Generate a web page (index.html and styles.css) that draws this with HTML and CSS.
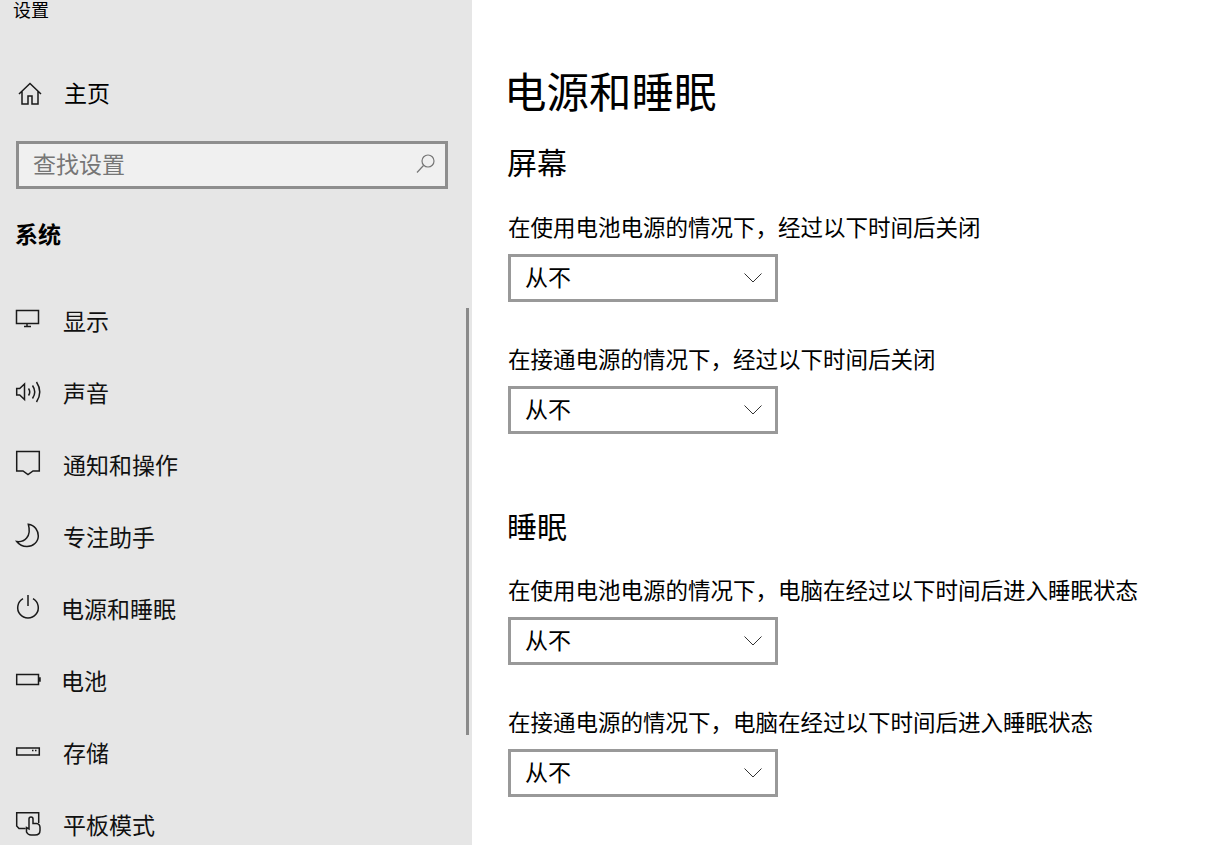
FILE: index.html
```html
<!DOCTYPE html>
<html lang="zh-CN">
<head>
    <meta charset="utf-8">
    <title>设置</title>
    <link rel="stylesheet" href="styles.css">
</head>
<body>
    <div class="sidebar">
        <div class="app-title">设置</div>
        <div class="nav-item home">
            <svg class="icon" viewBox="0 0 24 24"><path d="M1 12 12 1.500 23 12M4 9.500V22h6v-8h4v8h6V9.500"/></svg>
            <span>主页</span>
        </div>
        <div class="search">
            <span class="search-text">查找设置</span>
            <svg class="search-icon" viewBox="0 0 20 20"><circle cx="12" cy="7" r="6"/><path d="M7.500 11.500 1 18.500"/></svg>
        </div>
        <div class="group-title">系统</div>
        <div class="nav-item">
            <svg class="icon" viewBox="0 0 24 24"><path d="M.5 2.500h22v13H.5zM11 15.500v3M8 18.500h7"/></svg>
            <span>显示</span>
        </div>
        <div class="nav-item">
            <svg class="icon" viewBox="0 0 24 24"><path d="M.7 8.500h3l4.800-4.500v15.500l-4.800-4.500h-3zM12.500 8.500q2.500 3.500 0 7M16.500 5.500q4.500 6.500 0 13M20.500 2q6.500 10 0 20"/></svg>
            <span>声音</span>
        </div>
        <div class="nav-item">
            <svg class="icon" viewBox="0 0 24 24"><path d="M.7-.5h22.600v19.500H17l-5 3.500-5-3.500H.7z"/></svg>
            <span>通知和操作</span>
        </div>
        <div class="nav-item">
            <svg class="icon" viewBox="0 0 24 24"><path d="M12.300.3C19 1 22.300 7 22.300 12c0 6-5.300 10.500-11.300 10.500-4 0-8-2-10.300-5 7.300 1 15.300-4.500 11.600-17.200z"/></svg>
            <span>专注助手</span>
        </div>
        <div class="nav-item power">
            <svg class="icon" viewBox="0 0 24 24"><path d="M7 2.700a10.300 10.300 0 1 0 10 0M12-1v11"/></svg>
            <span>电源和睡眠</span>
        </div>
        <div class="nav-item power">
            <svg class="icon" viewBox="0 0 24 24"><path d="M.7 6.500h21.800v10H.7zM22.500 10H24v3h-1.500"/></svg>
            <span>电池</span>
        </div>
        <div class="nav-item">
            <svg class="icon" viewBox="0 0 24 24"><path d="M.7 8h22.600v7H.7zM16 10.500h1.500M19 10.500h1.500"/></svg>
            <span>存储</span>
        </div>
        <div class="nav-item">
            <svg class="icon" viewBox="0 0 24 24"><path d="M9.500 16.500H3L.7 14V.7h22V11M10.500 20v-4.500l2.500 1.500V7q0-2 2-2t2 2v4.500h3.500q3.500.5 3.500 4v3q0 4.500-5 4.500h-4q-3 0-4.500-3z"/></svg>
            <span>平板模式</span>
        </div>
        <div class="scrollbar"></div>
    </div>
    <div class="main">
        <h1>电源和睡眠</h1>
        <h2>屏幕</h2>
        <div class="field">
            <div class="field-label">在使用电池电源的情况下，经过以下时间后关闭</div>
            <div class="select"><span>从不</span><svg class="chevron" viewBox="0 0 18 10"><path d="M.5.500 9 9 17.500.500"/></svg></div>
        </div>
        <div class="field">
            <div class="field-label">在接通电源的情况下，经过以下时间后关闭</div>
            <div class="select"><span>从不</span><svg class="chevron" viewBox="0 0 18 10"><path d="M.5.500 9 9 17.500.500"/></svg></div>
        </div>
        <h2 class="sleep">睡眠</h2>
        <div class="field">
            <div class="field-label">在使用电池电源的情况下，电脑在经过以下时间后进入睡眠状态</div>
            <div class="select"><span>从不</span><svg class="chevron" viewBox="0 0 18 10"><path d="M.5.500 9 9 17.500.500"/></svg></div>
        </div>
        <div class="field">
            <div class="field-label">在接通电源的情况下，电脑在经过以下时间后进入睡眠状态</div>
            <div class="select"><span>从不</span><svg class="chevron" viewBox="0 0 18 10"><path d="M.5.500 9 9 17.500.500"/></svg></div>
        </div>
    </div>
</body>
</html>
```
FILE: styles.css
```css
html, body {
    height: 100%;
}
body {
    margin: 0;
    display: flex;
    overflow: hidden;
    background-color: #fff;
    color: #000;
    font-family: "Noto Sans CJK SC", "Liberation Sans", sans-serif;
}
.sidebar {
    position: relative;
    flex: none;
    width: 472px;
    height: 845px;
    overflow: hidden;
    background-color: #e6e6e6;
}
.app-title {
    height: 22px;
    padding-left: 13px;
    font-size: 18px;
    line-height: 18px;
}
.nav-item {
    display: flex;
    align-items: center;
    height: 72px;
    padding-left: 16px;
    font-size: 23px;
    color: #111;
}
.nav-item span {
    margin-left: 23px;
}
.nav-item.power span {
    margin-left: 21px;
}
.nav-item.home {
    margin-top: 36px;
    padding-left: 18px;
    color: #000;
}
.nav-item.home span {
    margin-left: 22px;
    margin-bottom: 4px;
}
.icon {
    flex: none;
    width: 24px;
    height: 24px;
    overflow: visible;
    fill: none;
    stroke: #1a1a1a;
    stroke-width: 1.500;
}
.search {
    display: flex;
    align-items: center;
    justify-content: space-between;
    box-sizing: border-box;
    width: 432px;
    height: 48px;
    margin: 11px 0 0 16px;
    padding: 0 9px 0 14px;
    border: 3px solid #8e8e8e;
    background-color: #f0f0f0;
    font-size: 23px;
    color: #767676;
}
.search-text {
    margin-bottom: 4px;
}
.search-icon {
    width: 20px;
    height: 20px;
    margin-bottom: 2px;
    fill: none;
    stroke: #767676;
    stroke-width: 1.200;
}
.group-title {
    height: 68px;
    margin-top: 27px;
    padding-left: 15px;
    font-size: 23px;
    font-weight: 700;
    line-height: 34px;
}
.scrollbar {
    position: absolute;
    top: 308px;
    left: 466px;
    width: 3px;
    height: 427px;
    background-color: #8a8a8a;
}
.main {
    flex: 1;
    padding-left: 36px;
}
h1 {
    margin: 60px 0 0 -4px;
    font-size: 42.500px;
    font-weight: 400;
    line-height: 60px;
}
h2 {
    margin: 19px 0 0 -1px;
    font-size: 30px;
    font-weight: 400;
    line-height: 44px;
}
h2.sleep {
    margin-top: 69px;
    margin-bottom: -1px;
}
.field {
    margin-top: 27px;
}
.field + .field {
    margin-top: 40px;
}
.field-label {
    font-size: 22.500px;
    line-height: 32px;
    color: #000;
}
.select {
    display: flex;
    align-items: center;
    justify-content: space-between;
    box-sizing: border-box;
    width: 270px;
    height: 48px;
    margin-top: 12px;
    padding: 0 13px 0 14px;
    border: 3px solid #999;
    font-size: 23px;
}
.select span {
    margin-bottom: 4px;
}
.chevron {
    width: 18px;
    height: 10px;
    fill: none;
    stroke: #333;
    stroke-width: 1;
}
```
